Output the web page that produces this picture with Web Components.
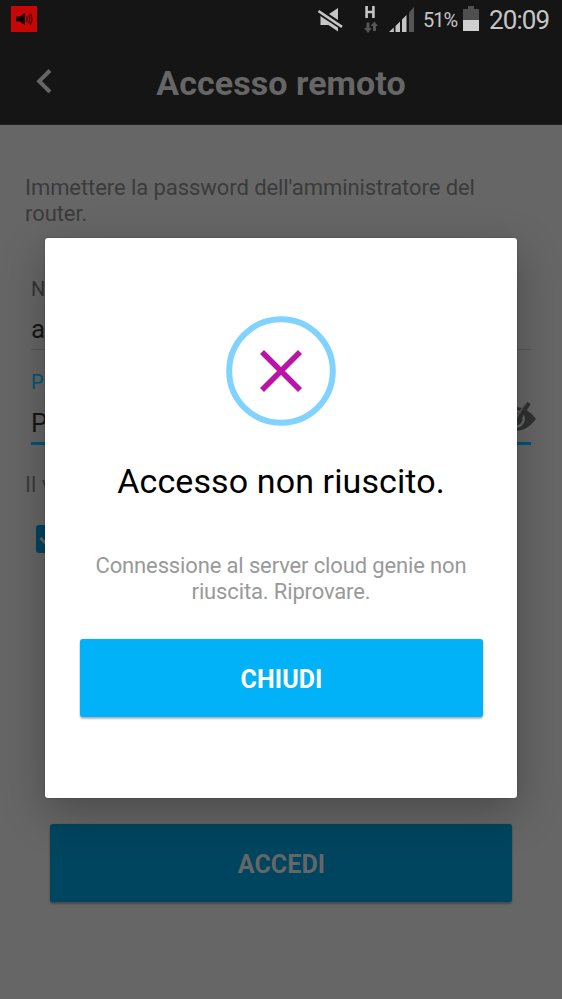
<!DOCTYPE html>
<html lang="it">
<head>
<meta charset="utf-8">
<title>Accesso remoto</title>
<style>
html,body{margin:0;height:999px;overflow:hidden;background:#666}
body{font-family:Roboto,"Noto Sans",sans-serif}
</style>
</head>
<body>
<remote-access-app></remote-access-app>
<script>
function define(name, html){
  customElements.define(name, class extends HTMLElement{
    constructor(){
      super();
      const t=document.createElement('template');
      t.innerHTML=html;
      this.attachShadow({mode:'open'}).append(t.content.cloneNode(true));
    }
  });
}

define('status-bar', `
<style>
:host{display:flex;height:40px;padding:0 12px 0 11px;background:#151515;color:#c5c5c5;align-items:flex-start;box-sizing:border-box}
svg{display:block;flex:none}
.volume{margin-top:6px}
.mute{margin:7px 0 0 auto}
.data{margin:5px 0 0 20px}
.signal{margin:7px 0 0 11px}
.pct{font-size:20px;line-height:24px;margin:8px 0 0 9px;width:34px;white-space:nowrap;letter-spacing:-1px}
.battery{margin:6px 0 0 6px}
.clock{font-size:26px;line-height:30px;margin:5px 0 0 10px;width:61px;white-space:nowrap;letter-spacing:-.9px}
</style>
<svg class="volume" width="26" height="26" viewBox="0 0 26 26"><path fill="#c80606" d="M0 0h26v26H0z"/><path fill="#180000" d="M5 10.500h3.500L14 7v12l-5.500-3.500H5z"/><path d="M15.500 10q1.500 3 0 6M17.500 8.500q2.500 4.500 0 9M19 7.500q4 5.500 0 11" fill="none" stroke="#400" stroke-width="1.200"/></svg>
<svg class="mute" width="26" height="26" viewBox="0 0 26 26"><path fill="#c5c5c5" d="M2.500 8.500H8L20 17V24.500L10.500 18H2.500zM11 7 20 1v12z"/><path d="M1 4.800 24 20" stroke="#151515" stroke-width="5.500"/><path d="M.5 4 24 19.800" stroke="#c5c5c5" stroke-width="2.600"/></svg>
<svg class="data" width="14" height="29" viewBox="0 0 14 29"><path d="M2.600 1v12M9.400 1v12M3 7h7" stroke="#c5c5c5" stroke-width="2.600"/><path fill="#555" d="M2.500 17.500h3V23h2.300L4 28l-4-5h2.500zM9 26h3V21h2l-3.700-4.500L6.500 21H9z"/></svg>
<svg class="signal" width="25" height="25" viewBox="0 0 25 25"><path fill="#c5c5c5" d="M0 25 4.800 20.500V25zM6.500 19 11 14.500V25H6.500zM13 12.500 17.500 8v17H13z"/><path fill="#555" d="M20 5.500 25 0v25h-5z"/></svg>
<span class="pct">51%</span>
<svg class="battery" width="16" height="25" viewBox="0 0 16 25"><path fill="#4f4f4f" d="M5 0h6v3h5v11H0V3h5z"/><path fill="#cfcfcf" d="M0 14h16v11H0z"/></svg>
<span class="clock">20:09</span>`);

define('app-header', `
<style>
:host{display:grid;grid-template-columns:88px 1fr 88px;height:85px;background:#151515;align-items:center;box-sizing:border-box;border-bottom:1px solid #222}
svg{margin:-3px 0 0 36px}
h1{margin:1px 0 0;font-size:34px;line-height:40px;color:#666;text-align:center;font-weight:700;white-space:nowrap;letter-spacing:.05px}
</style>
<svg width="16" height="24" viewBox="0 0 16 24"><path d="M14 1.500 3.200 12.200 14 23" fill="none" stroke="#666" stroke-width="4"/></svg>
<h1><slot></slot></h1>`);

define('form-field', `
<style>
:host{display:block;height:93px;box-sizing:border-box;margin:0 31px;color:#161616;position:relative}
.label{font-size:20px;line-height:24px;color:var(--label,#343434);height:24px}
.value{font-size:26px;line-height:var(--line,30px);height:35px;margin-top:13px;border-bottom:var(--rule,1px solid #555)}
.icon{position:absolute;right:-5px;top:30px}
</style>
<div class="label"><slot name="label"></slot></div>
<div class="value"><slot></slot></div>
<div class="icon"><slot name="icon"></slot></div>`);

define('hidden-eye', `
<style>:host{display:block}svg{display:block}</style>
<svg width="40" height="34" viewBox="0 0 40 34"><path fill="#303132" fill-rule="evenodd" d="M0 19Q9 7 20 7T40 19Q31 31 20 31T0 19Zm11 0a9 9 0 1 0 18 0 9 9 0 1 0-18 0Z"/><circle cx="20" cy="19" r="6.500" fill="#303132"/><path d="M11.500 32 30 4" stroke="#585858" stroke-width="3"/><path d="M15 31.500 33 3" stroke="#303132" stroke-width="4"/></svg>`);

define('check-box', `
<style>:host{display:block}svg{display:block}</style>
<svg width="28" height="28" viewBox="0 0 28 28"><rect width="28" height="28" rx="3" fill="#00455f"/><path d="m4.500 13 7 7L23 7" fill="none" stroke="#666" stroke-width="3"/></svg>`);

define('action-button', `
<style>
:host{display:block}
button{display:block;width:100%;height:78px;border:0;padding:3px 0 0 1px;border-radius:3px;background:var(--fill);color:var(--ink);font:700 25px/30px Roboto,sans-serif;letter-spacing:.1px;box-shadow:0 2px 2px rgba(0,0,0,.27),0 0 2px rgba(0,0,0,.18)}
</style>
<button><slot></slot></button>`);

define('error-icon', `
<style>:host{display:block}svg{display:block}</style>
<svg width="110" height="110" viewBox="0 0 110 110"><circle cx="55" cy="55" r="51.800" fill="none" stroke="#80d2ff" stroke-width="6"/><path d="M36 36 74 74M74 36 36 74" stroke="#b914a7" stroke-width="5.600"/></svg>`);

define('alert-dialog', `
<style>
:host{position:absolute;left:45px;top:238px;width:472px;height:560px;box-sizing:border-box;padding:78px 34px 0;background:#fff;border-radius:3px;box-shadow:0 14px 44px rgba(0,0,0,.28),0 0 2px rgba(0,0,0,.3);display:flex;flex-direction:column;align-items:center}
h2{margin:35px 0 0;font-weight:400;font-size:34px;line-height:40px;color:#000;white-space:nowrap;letter-spacing:.1px}
p{margin:52px 0 0;font-size:22px;line-height:25.700px;color:#999;text-align:center;white-space:nowrap;letter-spacing:-.14px}
action-button{width:403px;margin-top:35px;--fill:#02b2f8;--ink:#fff}
</style>
<error-icon></error-icon>
<h2><slot name="title"></slot></h2>
<p><slot></slot></p>
<action-button>CHIUDI</action-button>`);

define('remote-access-app', `
<style>
:host{display:block;position:relative;width:562px;height:999px;overflow:hidden;background:#666}
.intro{margin:50px 25px 0;font-size:22px;line-height:25.700px;height:52px;color:#3b3b3b;white-space:nowrap;letter-spacing:-.07px}
.first{margin-top:50px}
.second{--label:#005676;--rule:3px solid #005676;--line:32px}
.note{margin:9px 25px 0;font-size:22px;line-height:26px;color:#3c3c3c}
check-box{margin:27px 0 0 36px}
.login{margin:271px 50px 0;--fill:#00455f;--ink:#666}
</style>
<status-bar></status-bar>
<app-header>Accesso remoto</app-header>
<div class="intro">Immettere la password dell'amministratore del<br>router.</div>
<form-field class="first"><span slot="label">N</span>a</form-field>
<form-field class="second"><span slot="label">Pa</span>P<hidden-eye slot="icon"></hidden-eye></form-field>
<div class="note">Il v</div>
<check-box></check-box>
<action-button class="login">ACCEDI</action-button>
<alert-dialog><span slot="title">Accesso non riuscito.</span>Connessione al server cloud genie non<br>riuscita. Riprovare.</alert-dialog>`);
</script>
</body>
</html>
